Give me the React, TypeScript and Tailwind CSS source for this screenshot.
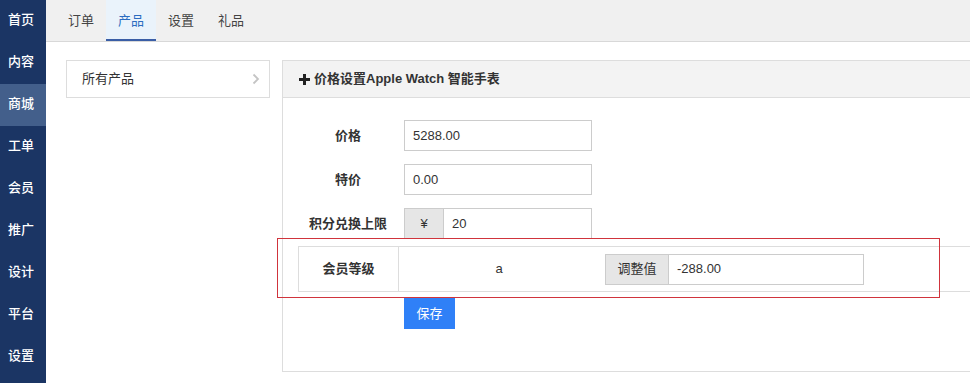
import React from "react";

const font = { fontFamily: '"Liberation Sans", "Noto Sans CJK SC", sans-serif' };

const sideItems = ["首页", "内容", "商城", "工单", "会员", "推广", "设计", "平台", "设置"];
const tabs = ["订单", "产品", "设置", "礼品"];

function FormRow({ label, children }: { label: string; children: React.ReactNode }) {
  return (
    <div className="flex items-center h-[31px]">
      <div className="w-[100px] text-center font-bold text-[13px] text-[#333]">{label}</div>
      <div className="ml-[6px] flex">{children}</div>
    </div>
  );
}

export default function App() {
  return (
    <div className="flex w-[970px] h-[383px] overflow-hidden bg-white text-[13px] text-[#333]" style={font}>
      <div className="w-[46px] shrink-0 bg-[#1b3564] flex flex-col">
        {sideItems.map((s, i) => (
          <div
            key={s + i}
            className={
              "h-[42px] shrink-0 flex items-center pl-[8px] pb-[2px] text-white font-medium text-[13px] " +
              (i === 2 ? "bg-[#435f8b]" : "")
            }
          >
            {s}
          </div>
        ))}
      </div>
      <div className="flex-1 flex flex-col min-w-0">
        <div className="h-[42px] shrink-0 bg-[#f0f0f0] border-b border-[#d8d8d8] flex pl-[10px]">
          {tabs.map((t, i) => (
            <div
              key={t}
              className={
                "w-[50px] flex items-center justify-center text-[13px] " +
                (i === 1
                  ? "bg-[#eaf3fb] text-[#2b6cc0] border-b-2 border-[#3a5ea6] pt-[2px]"
                  : "text-[#444]")
              }
            >
              {t}
            </div>
          ))}
        </div>
        <div className="flex pt-[18px] pl-[20px] gap-[12px]">
          <div className="w-[204px] h-[38px] shrink-0 border border-[#dddddd] flex items-center justify-between pl-[15px] pr-[9px]">
            <span className="text-[#333]">所有产品</span>
            <svg width="8" height="12" viewBox="0 0 8 12">
              <path d="M1.5 1.5 L6 6 L1.5 10.5" fill="none" stroke="#c4c4c4" strokeWidth="1.8" />
            </svg>
          </div>
          <div className="flex-1 border-l border-t border-b border-[#dddddd] pb-[42px]">
            <div className="h-[37px] bg-[#f3f3f3] border-b border-[#dddddd] flex items-center pl-[16px] font-bold text-[13px] text-[#333]">
              <svg width="11" height="11" viewBox="0 0 11 11" className="mr-[4px]">
                <path d="M4 0 H7 V4 H11 V7 H7 V11 H4 V7 H0 V4 H4 Z" fill="#222" />
              </svg>
              价格设置Apple Watch 智能手表
            </div>
            <div className="pl-[15px] pt-[22px] flex flex-col">
              <div className="flex flex-col gap-[13px]">
                <FormRow label="价格">
                  <div className="w-[188px] h-[31px] border border-[#cccccc] flex items-center pl-[8px]">5288.00</div>
                </FormRow>
                <FormRow label="特价">
                  <div className="w-[188px] h-[31px] border border-[#cccccc] flex items-center pl-[8px]">0.00</div>
                </FormRow>
                <FormRow label="积分兑换上限">
                  <div className="w-[188px] h-[31px] border border-[#cccccc] flex">
                    <div className="w-[39px] h-full bg-[#e6e6e6] border-r border-[#cccccc] flex items-center justify-center">¥</div>
                    <div className="flex items-center pl-[8px]">20</div>
                  </div>
                </FormRow>
              </div>
              <div className="relative mt-[7px] h-[46px] border-t border-b border-l border-[#dddddd] flex items-center">
                <div className="w-[100px] h-full border-r border-[#dddddd] flex items-center justify-center font-bold">会员等级</div>
                <div className="w-[200px] text-center text-[#333]">a</div>
                <div className="ml-[6px] flex h-[31px]">
                  <div className="w-[64px] bg-[#e6e6e6] border border-[#cccccc] flex items-center justify-center text-[#333]">调整值</div>
                  <div className="w-[195px] border-t border-r border-b border-[#cccccc] flex items-center pl-[8px]">-288.00</div>
                </div>
                <div className="absolute left-[-22px] top-[-9px] w-[663px] h-[60px] border border-[#d0343c] pointer-events-none" />
              </div>
              <div className="mt-[6px] ml-[106px] w-[51px] h-[31px] bg-[#2f80f7] text-white flex items-center justify-center">保存</div>
            </div>
          </div>
        </div>
      </div>
    </div>
  );
}
